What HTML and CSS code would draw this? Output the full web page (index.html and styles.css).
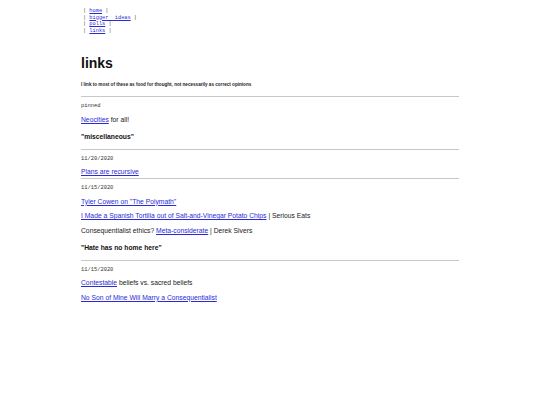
FILE: index.html
```html
<!DOCTYPE html>
<html>
<head>
<meta charset="utf-8">
<link rel="stylesheet" href="styles.css">
</head>
<body>
<div class="page">
<div class="nav">
<div class="nav-line">| <a href="#">home</a> |</div>
<div class="nav-line">| <a href="#">bigger  ideas</a> |</div>
<div class="nav-line">| <a href="#">polls</a> |</div>
<div class="nav-line">| <a href="#">links</a> |</div>
</div>
<h1 class="title">links</h1>
<p class="intro">I link to most of these as food for thought, not necessarily as correct opinions</p>
<hr class="rule">
<div class="date">pinned</div>
<p class="item"><a href="#">Neocities</a> for all!</p>
<p class="cat">"miscellaneous"</p>
<hr class="rule">
<div class="date">11/20/2020</div>
<p class="item"><a href="#">Plans are recursive</a></p>
<hr class="rule tight">
<div class="date">11/15/2020</div>
<p class="item"><a href="#">Tyler Cowen on "The Polymath"</a></p>
<p class="item"><a href="#">I Made a Spanish Tortilla out of Salt-and-Vinegar Potato Chips</a> | Serious Eats</p>
<p class="item">Consequentialist ethics? <a href="#">Meta-considerate</a> | Derek Sivers</p>
<p class="cat">"Hate has no home here"</p>
<hr class="rule">
<div class="date">11/15/2020</div>
<p class="item"><a href="#">Contestable</a> beliefs vs. sacred beliefs</p>
<p class="item"><a href="#">No Son of Mine Will Marry a Consequentialist</a></p>
</div>
</body>
</html>
```
FILE: styles.css
```css
html, body {
  margin: 0;
  padding: 0;
  background: #fff;
}
body {
  font-family: "Liberation Sans", Arial, sans-serif;
  color: #222;
}
.page {
  margin-left: 81px;
  width: 378px;
  padding-top: 8px;
}
a {
  color: #2a2ad8;
}
.nav {
  font-family: "Liberation Mono", monospace;
  font-size: 5.3px;
  margin: 0 0 0 2px;
  color: #444;
}
.nav-line {
  white-space: pre;
  height: 6.5px;
  line-height: 6.5px;
}
.title {
  font-size: 14px;
  font-weight: bold;
  margin: 21px 0 0 0;
  line-height: 16px;
  color: #111;
}
.intro {
  font-size: 4.6px;
  font-weight: bold;
  margin: 11px 0 0 0;
  line-height: 6px;
  color: #222;
}
.rule {
  border: 0;
  border-top: 1px solid #c8c8c8;
  margin: 8px 0 0 0;
  height: 0;
}
.rule.tight {
  margin-top: 2px;
}
.date {
  font-family: "Liberation Mono", monospace;
  font-size: 5.4px;
  line-height: 6px;
  margin-top: 6px;
  color: #333;
}
.item {
  font-size: 6.75px;
  line-height: 8px;
  margin: 6.5px 0 0 0;
}
.cat {
  font-size: 6.75px;
  font-weight: bold;
  line-height: 8px;
  margin: 9px 0 0 0;
  color: #111;
}
```
